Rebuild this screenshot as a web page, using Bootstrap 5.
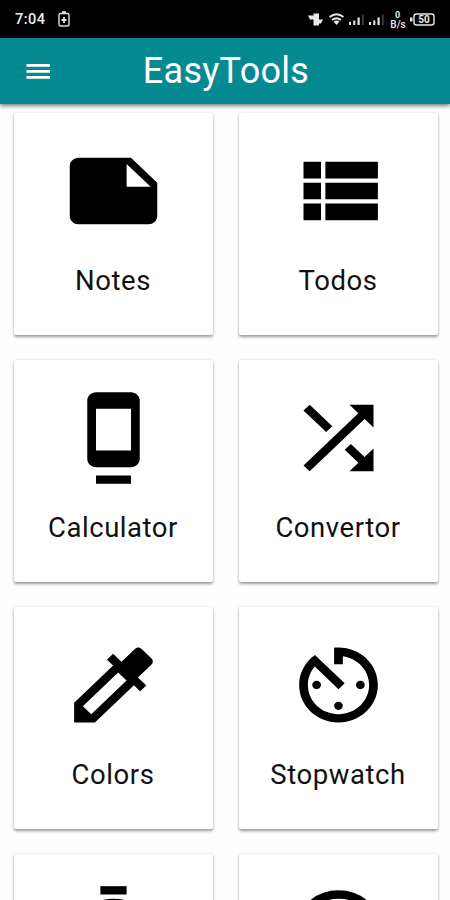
<!DOCTYPE html>
<html lang="en">
<head>
<meta charset="utf-8">
<meta name="viewport" content="width=device-width, initial-scale=1">
<title>EasyTools</title>
<link href="https://cdn.jsdelivr.net/npm/bootstrap@5.3.0/dist/css/bootstrap.min.css" rel="stylesheet">
<style>
body{font-family:Roboto,"Liberation Sans",sans-serif;background:#fefefe;color:#111}
.screen{width:450px;height:900px}
.statusbar{height:38px;padding:1px 15px 0 15px;color:#eee}
.clock{font-size:14.5px;font-weight:500;letter-spacing:.5px;width:43px;padding-top:1px}
.battery-saver{margin-bottom:1px}
.appbar{height:66px;background:#068a92;box-shadow:0 2px 4px rgba(0,0,0,.5);padding:0 25px}
.appbar h1{font-size:36px;letter-spacing:.3px;line-height:66px}
.menu-btn{width:26px}
.tools{display:grid;grid-template-columns:199px 199px;grid-auto-rows:222px;gap:25px 26px;padding:9px 12.5px 9px 13.5px}
.tool{border-radius:2px;box-shadow:0 1.5px 3px rgba(0,0,0,.4);padding-top:28px}
.tool .glyph{width:105px;height:100px;flex:none}
.tool span{font-size:27.5px;line-height:32px;margin-top:24px;letter-spacing:.55px}
</style>
</head>
<body>
<div class="screen overflow-hidden d-flex flex-column">
  <div class="statusbar bg-black d-flex align-items-center flex-shrink-0">
    <span class="clock">7:04</span>
    <svg class="battery-saver me-auto" width="12" height="16" viewBox="0 0 12 16" fill="none" stroke="#e0e0e0" stroke-width="1.400"><rect x="1" y="2.500" width="10" height="12.500" rx="1.500"/><path d="M4 1.200h4M6 6v6M3.500 9h5" stroke-width="1.800"/></svg>
    <svg width="128" height="20" viewBox="0 0 128 20" fill="#e8e8e8">
      <path d="M6.500 3.500h5.500v12h-5.500zM1 5.500h6v4H3zM11 9.500h5l-2 4h-3z"/>
      <g fill="none" stroke="#e8e8e8" stroke-width="1.800"><path d="M22.500 7q7-5.500 14 0M25 10q4.500-3.500 9 0"/></g><path d="M26.500 11.500q3-2 6 0l-3 3.500z"/>
      <path d="M42 12h2v3h-2zM46.300 10.500h2V15h-2zM50.500 7.500h2.200V15h-2.200zM62 12h2v3h-2zM66.300 10.500h2V15h-2zM70.500 7.500h2.200V15h-2.200z"/>
      <path fill="#444" d="M55 4.500h1.600V15H55zM75 4.500h1.600V15H75z"/>
      <text x="90.500" y="7.800" font-size="9" font-weight="700" text-anchor="middle">0</text>
      <text x="91" y="18" font-size="10" font-weight="500" text-anchor="middle">B/s</text>
      <path d="M103 7.500h2.500v4H103z"/><rect x="107" y="4" width="20" height="11" rx="2.500" fill="none" stroke="#e8e8e8" stroke-width="1.400"/>
      <text x="117" y="13.200" font-size="10" font-weight="700" text-anchor="middle">50</text>
    </svg>
  </div>

  <header class="appbar d-flex align-items-center position-relative flex-shrink-0">
    <svg class="menu-btn" height="18" viewBox="0 0 26 18" fill="#fff"><path d="M1.500 2h23.500v2.800H1.500zM1.500 8h23.500v2.800H1.500zM1.500 14h23.500v2.800H1.500z"/></svg>
    <h1 class="flex-grow-1 text-center text-white fw-normal mb-0 me-4">EasyTools</h1>
  </header>

  <main class="tools">
    <div class="tool bg-white d-flex flex-column align-items-center">
      <svg class="glyph" viewBox="0 0 24 24" preserveAspectRatio="none"><path d="M22 10l-6-6H4c-1.100 0-2 .9-2 2v12.010c0 1.100.9 1.990 2 1.990l16-.010c1.100 0 2-.890 2-1.990v-8zm-7-4.500l5.500 5.500H15V5.500z"/></svg>
      <span>Notes</span>
    </div>
    <div class="tool bg-white d-flex flex-column align-items-center">
      <svg class="glyph" viewBox="0 0 24 24" preserveAspectRatio="none"><path d="M4 14h4v-4H4v4zm0 5h4v-4H4v4zM4 9h4V5H4v4zm5 5h12v-4H9v4zm0 5h12v-4H9v4zM9 5v4h12V5H9z"/></svg>
      <span>Todos</span>
    </div>
    <div class="tool bg-white d-flex flex-column align-items-center">
      <svg class="glyph" viewBox="0 0 24 24" preserveAspectRatio="none"><path d="M8 23h8v-2H8v2zm8-21.990L8 1c-1.100 0-2 .9-2 2v14c0 1.100.9 2 2 2h8c1.100 0 2-.9 2-2V3c0-1.100-.9-1.990-2-1.990zM16 15H8V5h8v10z"/></svg>
      <span>Calculator</span>
    </div>
    <div class="tool bg-white d-flex flex-column align-items-center">
      <svg class="glyph" viewBox="0 0 24 24" preserveAspectRatio="none"><path d="M10.590 9.170L5.410 4 4 5.410l5.170 5.170 1.420-1.410zM14.500 4l2.040 2.040L4 18.590 5.410 20 17.960 7.460 20 9.500V4h-5.500zm.33 9.410l-1.410 1.410 3.130 3.130L14.500 20H20v-5.500l-2.040 2.040-3.130-3.130z"/></svg>
      <span>Convertor</span>
    </div>
    <div class="tool bg-white d-flex flex-column align-items-center">
      <svg class="glyph" viewBox="0 0 24 24" preserveAspectRatio="none"><path d="M20.710 5.630l-2.340-2.340c-.39-.39-1.020-.39-1.410 0l-3.120 3.120-1.930-1.910-1.410 1.410 1.420 1.420L3 16.250V21h4.750l8.920-8.920 1.420 1.420 1.410-1.410-1.920-1.920 3.120-3.120c.4-.4.4-1.030.01-1.420zM6.920 19L5 17.080l8.060-8.060 1.920 1.920L6.920 19z"/></svg>
      <span>Colors</span>
    </div>
    <div class="tool bg-white d-flex flex-column align-items-center">
      <svg class="glyph" viewBox="0 0 24 24" preserveAspectRatio="none"><path d="M11 17c0 .55.45 1 1 1s1-.45 1-1-.45-1-1-1-1 .45-1 1zm0-14v4h2V5.080c3.390.49 6 3.390 6 6.920 0 3.870-3.130 7-7 7s-7-3.130-7-7c0-1.680.59-3.220 1.580-4.420L12 13l1.410-1.410-6.800-6.800v.02C4.420 6.450 3 9.050 3 12c0 4.970 4.020 9 9 9 4.970 0 9-4.030 9-9s-4.030-9-9-9h-1zm7 9c0-.55-.45-1-1-1s-1 .45-1 1 .45 1 1 1 1-.45 1-1zM6 12c0 .55.45 1 1 1s1-.45 1-1-.45-1-1-1-1 .45-1 1z"/></svg>
      <span>Stopwatch</span>
    </div>
    <div class="tool bg-white d-flex flex-column align-items-center">
      <svg class="glyph" viewBox="0 0 24 24" preserveAspectRatio="none"><path d="M9 1h6v2H9z"/><circle cx="12" cy="13" r="8" fill="none" stroke="#000" stroke-width="2"/><path d="M11 8h2v6h-2z"/></svg>
    </div>
    <div class="tool bg-white d-flex flex-column align-items-center">
      <svg class="glyph" viewBox="0 0 24 24" preserveAspectRatio="none"><circle cx="12" cy="12" r="9" fill="none" stroke="#000" stroke-width="2"/><path d="M11 7h1.500v5.250l4.500 2.670-.75 1.230L11 13z"/></svg>
    </div>
  </main>
</div>
<script src="https://cdn.jsdelivr.net/npm/bootstrap@5.3.0/dist/js/bootstrap.bundle.min.js"></script>
</body>
</html>
